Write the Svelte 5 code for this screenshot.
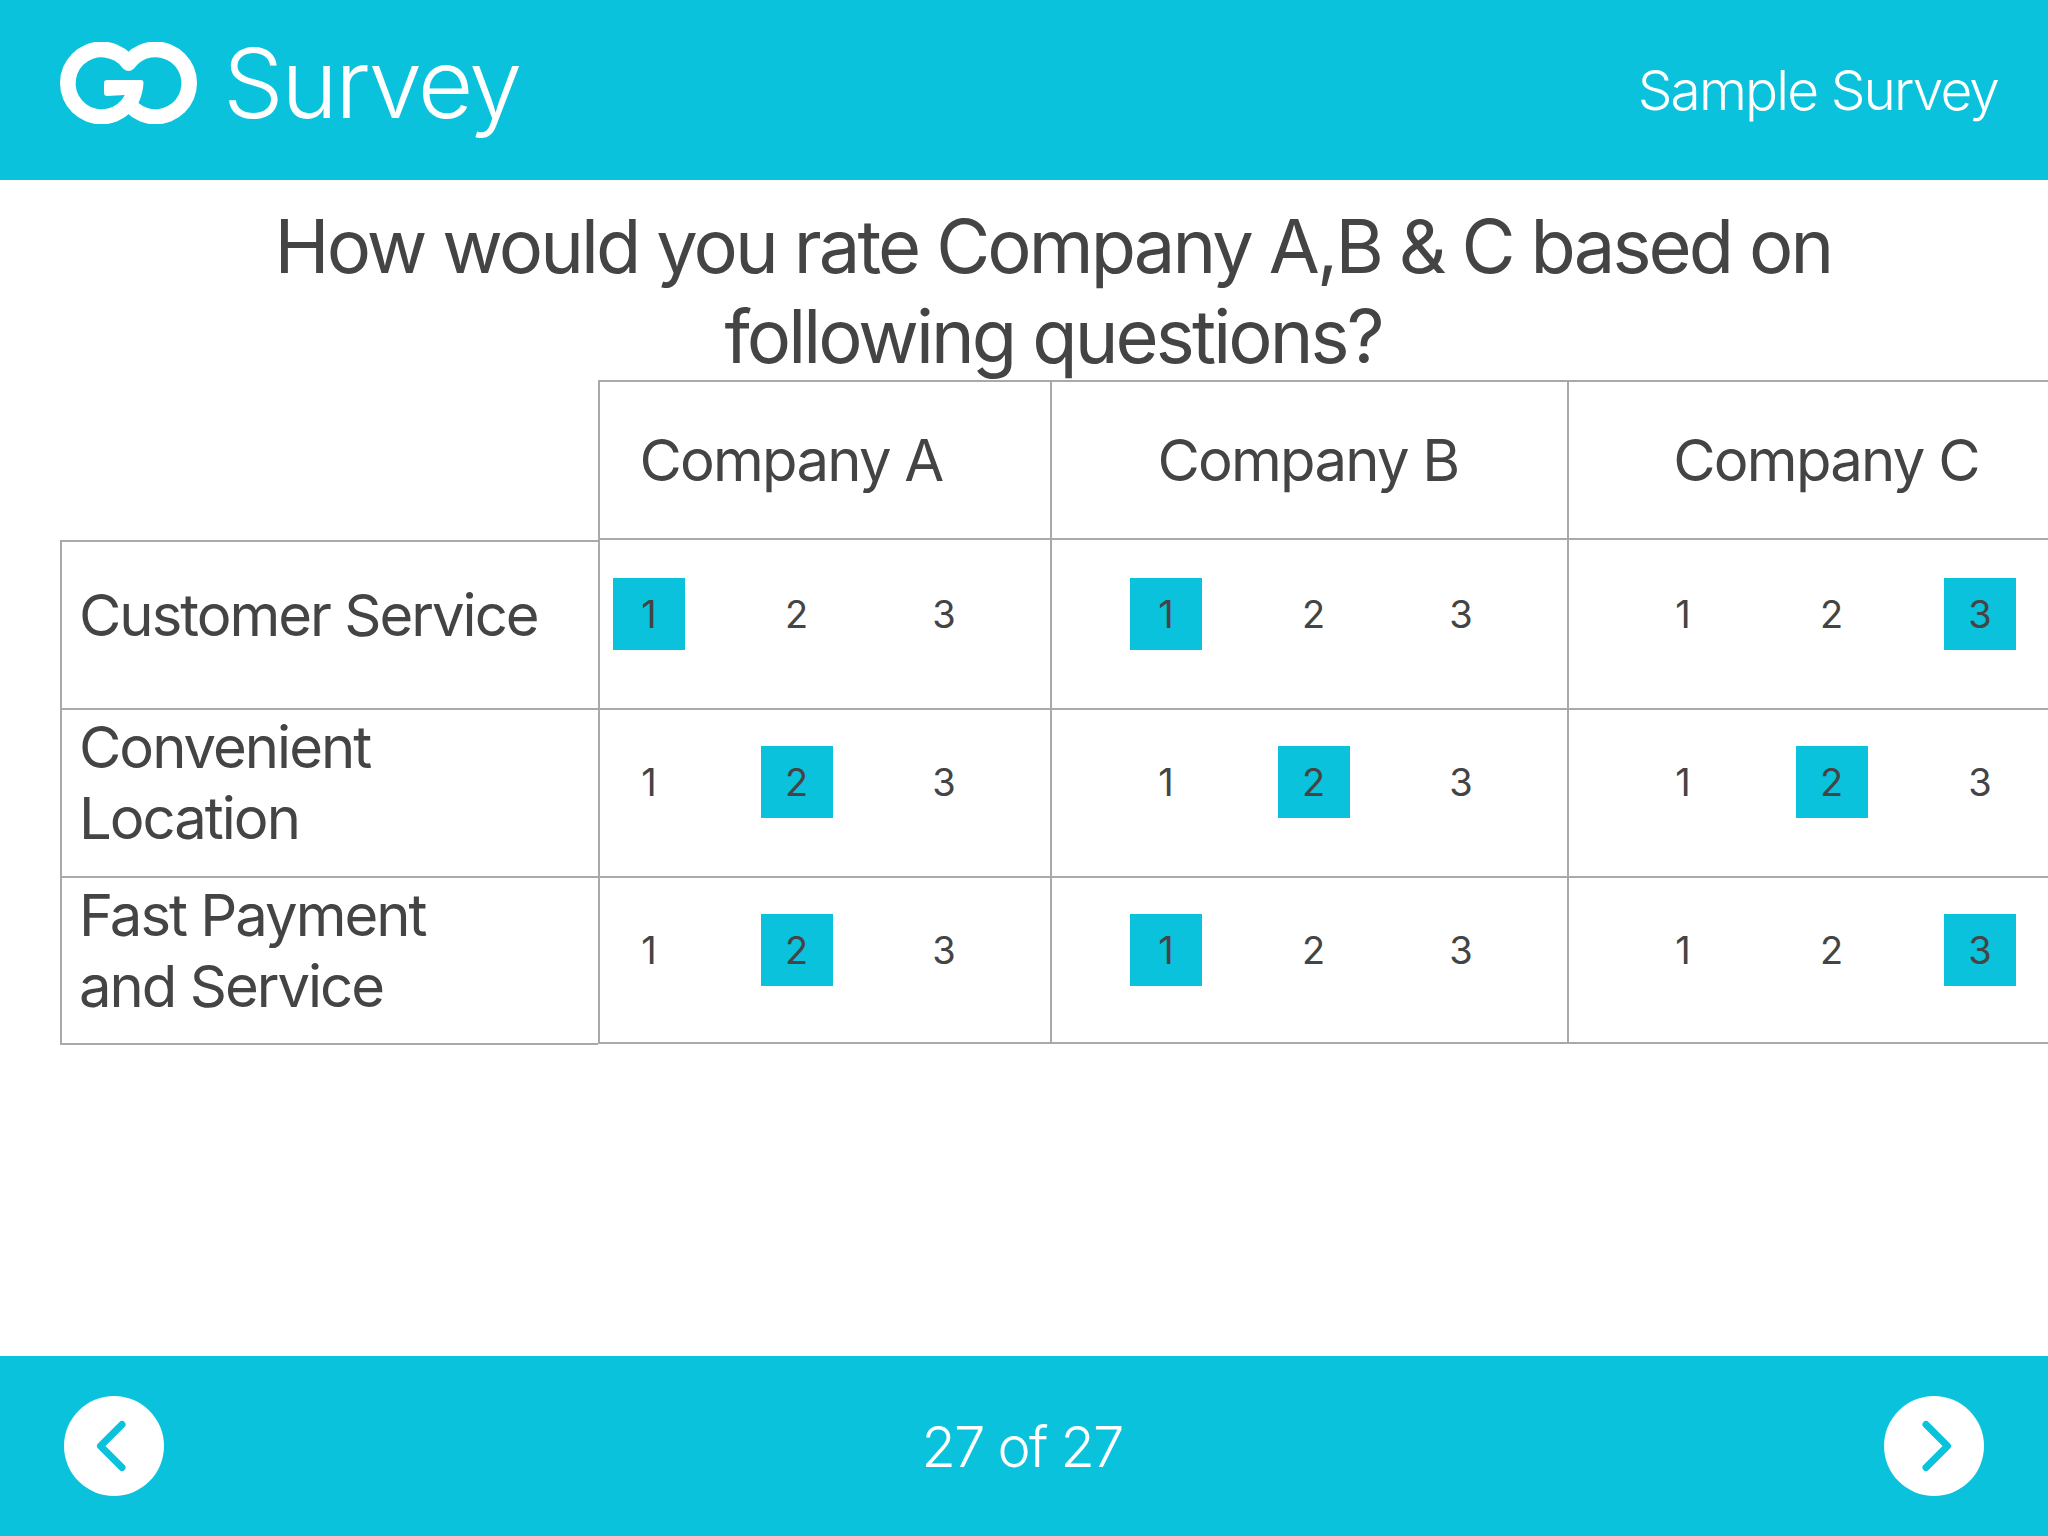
<script>
  const companies = [
    { name: 'Company A', cls: 'first', picks: [1, 2, 2] },
    { name: 'Company B', cls: '', picks: [1, 2, 1] },
    { name: 'Company C', cls: 'last', picks: [3, 2, 3] }
  ];
  const rows = [['Customer Service'], ['Convenient', 'Location'], ['Fast Payment', 'and Service']];
</script>

<div class="page">
  <header class="top">
    <div class="brand">
      <svg class="logo" viewBox="60 42 138 82" width="138" height="82" aria-hidden="true">
        <circle cx="101.5" cy="83" r="41.5" fill="#fff" />
        <circle cx="155.5" cy="83" r="41.5" fill="#fff" />
        <path fill="#0ac2db" d="M123 68.5A26 26 0 1 0 124.8 95L107 96Q104 96 104 93L104 83Q104 80 107 80L141 80Q143.5 80 143.5 83Q143 93 138.5 103A26 26 0 1 0 134 68.5Q131 71 128.6 71Q126 71 123 68.5Z" />
      </svg>
      <span class="brand-name">Survey</span>
    </div>
    <div class="survey-name">Sample Survey</div>
  </header>

  <main class="content">
    <h1>How would you rate Company A,B &amp; C based on<br />following questions?</h1>
    <div class="board">
      <div class="labels">
        {#each rows as lines}
          <div class="label">
            <span>{#each lines as l, i}{#if i}<br />{/if}{l}{/each}</span>
          </div>
        {/each}
      </div>
      <div class="matrix">
        {#each companies as c}
          <div class="column {c.cls}">
            <div class="head"><span>{c.name}</span></div>
            {#each c.picks as pick}
              <div class="scale">
                {#each [1, 2, 3] as n}
                  <span class="num" class:on={n === pick}>{n}</span>
                {/each}
              </div>
            {/each}
          </div>
        {/each}
      </div>
    </div>
  </main>

  <footer class="bottom">
    <button class="nav" aria-label="Previous">
      <svg viewBox="0 0 100 100" width="100" height="100"><path d="M58 28.5L36.5 50L58 71.5" /></svg>
    </button>
    <div class="count">27 of 27</div>
    <button class="nav" aria-label="Next">
      <svg viewBox="0 0 100 100" width="100" height="100"><path d="M42 28.5L63.5 50L42 71.5" /></svg>
    </button>
  </footer>
</div>

<style>
  :global(body) {
    margin: 0;
    background: #fff;
  }
  .page {
    width: 2048px;
    height: 1536px;
    display: flex;
    flex-direction: column;
    overflow: hidden;
    font-family: Inter, "Liberation Sans", sans-serif;
    font-weight: 380;
    color: #444;
  }
  .top {
    height: 180px;
    flex: none;
    background: #0ac2db;
    color: #fff;
    display: flex;
    align-items: center;
    justify-content: space-between;
    padding: 0 50px 0 60px;
    box-sizing: border-box;
  }
  .brand {
    display: flex;
    align-items: center;
    gap: 25px;
    padding-bottom: 14px;
  }
  .logo {
    display: block;
  }
  .brand-name {
    font-size: 96px;
    line-height: 116px;
    letter-spacing: -2.5px;
    font-weight: 350;
  }
  .survey-name {
    font-size: 55px;
    line-height: 66px;
    letter-spacing: -1.9px;
    font-weight: 350;
  }
  .content {
    flex: 1;
    min-height: 0;
  }
  h1 {
    margin: 0;
    padding: 21px 0 0 58px;
    height: 200px;
    box-sizing: border-box;
    font-size: 74px;
    line-height: 90px;
    font-weight: 380;
    letter-spacing: -2.9px;
    text-align: center;
    white-space: nowrap;
  }
  .board {
    display: flex;
    padding-left: 60px;
  }
  .labels {
    width: 538px;
    flex: none;
    margin-top: 160px;
    border-left: 2px solid #a9a9a9;
    border-bottom: 2px solid #a9a9a9;
    box-sizing: border-box;
    height: 505px;
  }
  .label {
    height: 168px;
    border-top: 2px solid #a9a9a9;
    box-sizing: border-box;
    display: flex;
    align-items: center;
    padding: 0 0 20px 17px;
    font-size: 58px;
    line-height: 71px;
    letter-spacing: -2px;
  }
  .label:last-child {
    height: 167px;
  }
  .matrix {
    display: flex;
    flex: none;
    border-top: 2px solid #a9a9a9;
    border-bottom: 2px solid #a9a9a9;
    height: 664px;
    box-sizing: border-box;
  }
  .column {
    width: 517px;
    flex: none;
    border-left: 2px solid #a9a9a9;
    box-sizing: border-box;
    --left: 78px;
  }
  .column.first {
    width: 452px;
    --left: 13px;
  }
  .column.last {
    width: 519px;
  }
  .head {
    height: 156px;
    display: flex;
    align-items: center;
    justify-content: center;
    font-size: 58px;
    letter-spacing: -1.75px;
    padding-left: var(--left);
    padding-right: 81px;
    box-sizing: border-box;
  }
  .scale {
    height: 168px;
    border-top: 2px solid #a9a9a9;
    box-sizing: border-box;
    padding: 36px 70px 0 var(--left);
    display: flex;
    justify-content: space-between;
    align-items: flex-start;
  }
  .head + .scale {
    height: 170px;
    padding-top: 38px;
  }
  .scale:last-child {
    height: 166px;
  }
  .num {
    width: 72px;
    height: 72px;
    display: flex;
    align-items: center;
    justify-content: center;
    font-size: 38px;
  }
  .num.on {
    background: #0ac2db;
  }
  .bottom {
    height: 180px;
    flex: none;
    background: #0ac2db;
    display: flex;
    align-items: center;
    justify-content: space-between;
    padding: 0 64px;
    box-sizing: border-box;
  }
  .nav {
    width: 100px;
    height: 100px;
    padding: 0;
    border: 0;
    border-radius: 50%;
    background: #fff;
  }
  .nav svg {
    display: block;
  }
  .nav path {
    fill: none;
    stroke: #0ac2db;
    stroke-width: 7;
    stroke-linecap: round;
    stroke-linejoin: round;
  }
  .count {
    color: #fff;
    font-size: 56px;
    line-height: 68px;
    letter-spacing: -1.8px;
    font-weight: 350;
    padding: 2px 4px 0 0;
  }
</style>
